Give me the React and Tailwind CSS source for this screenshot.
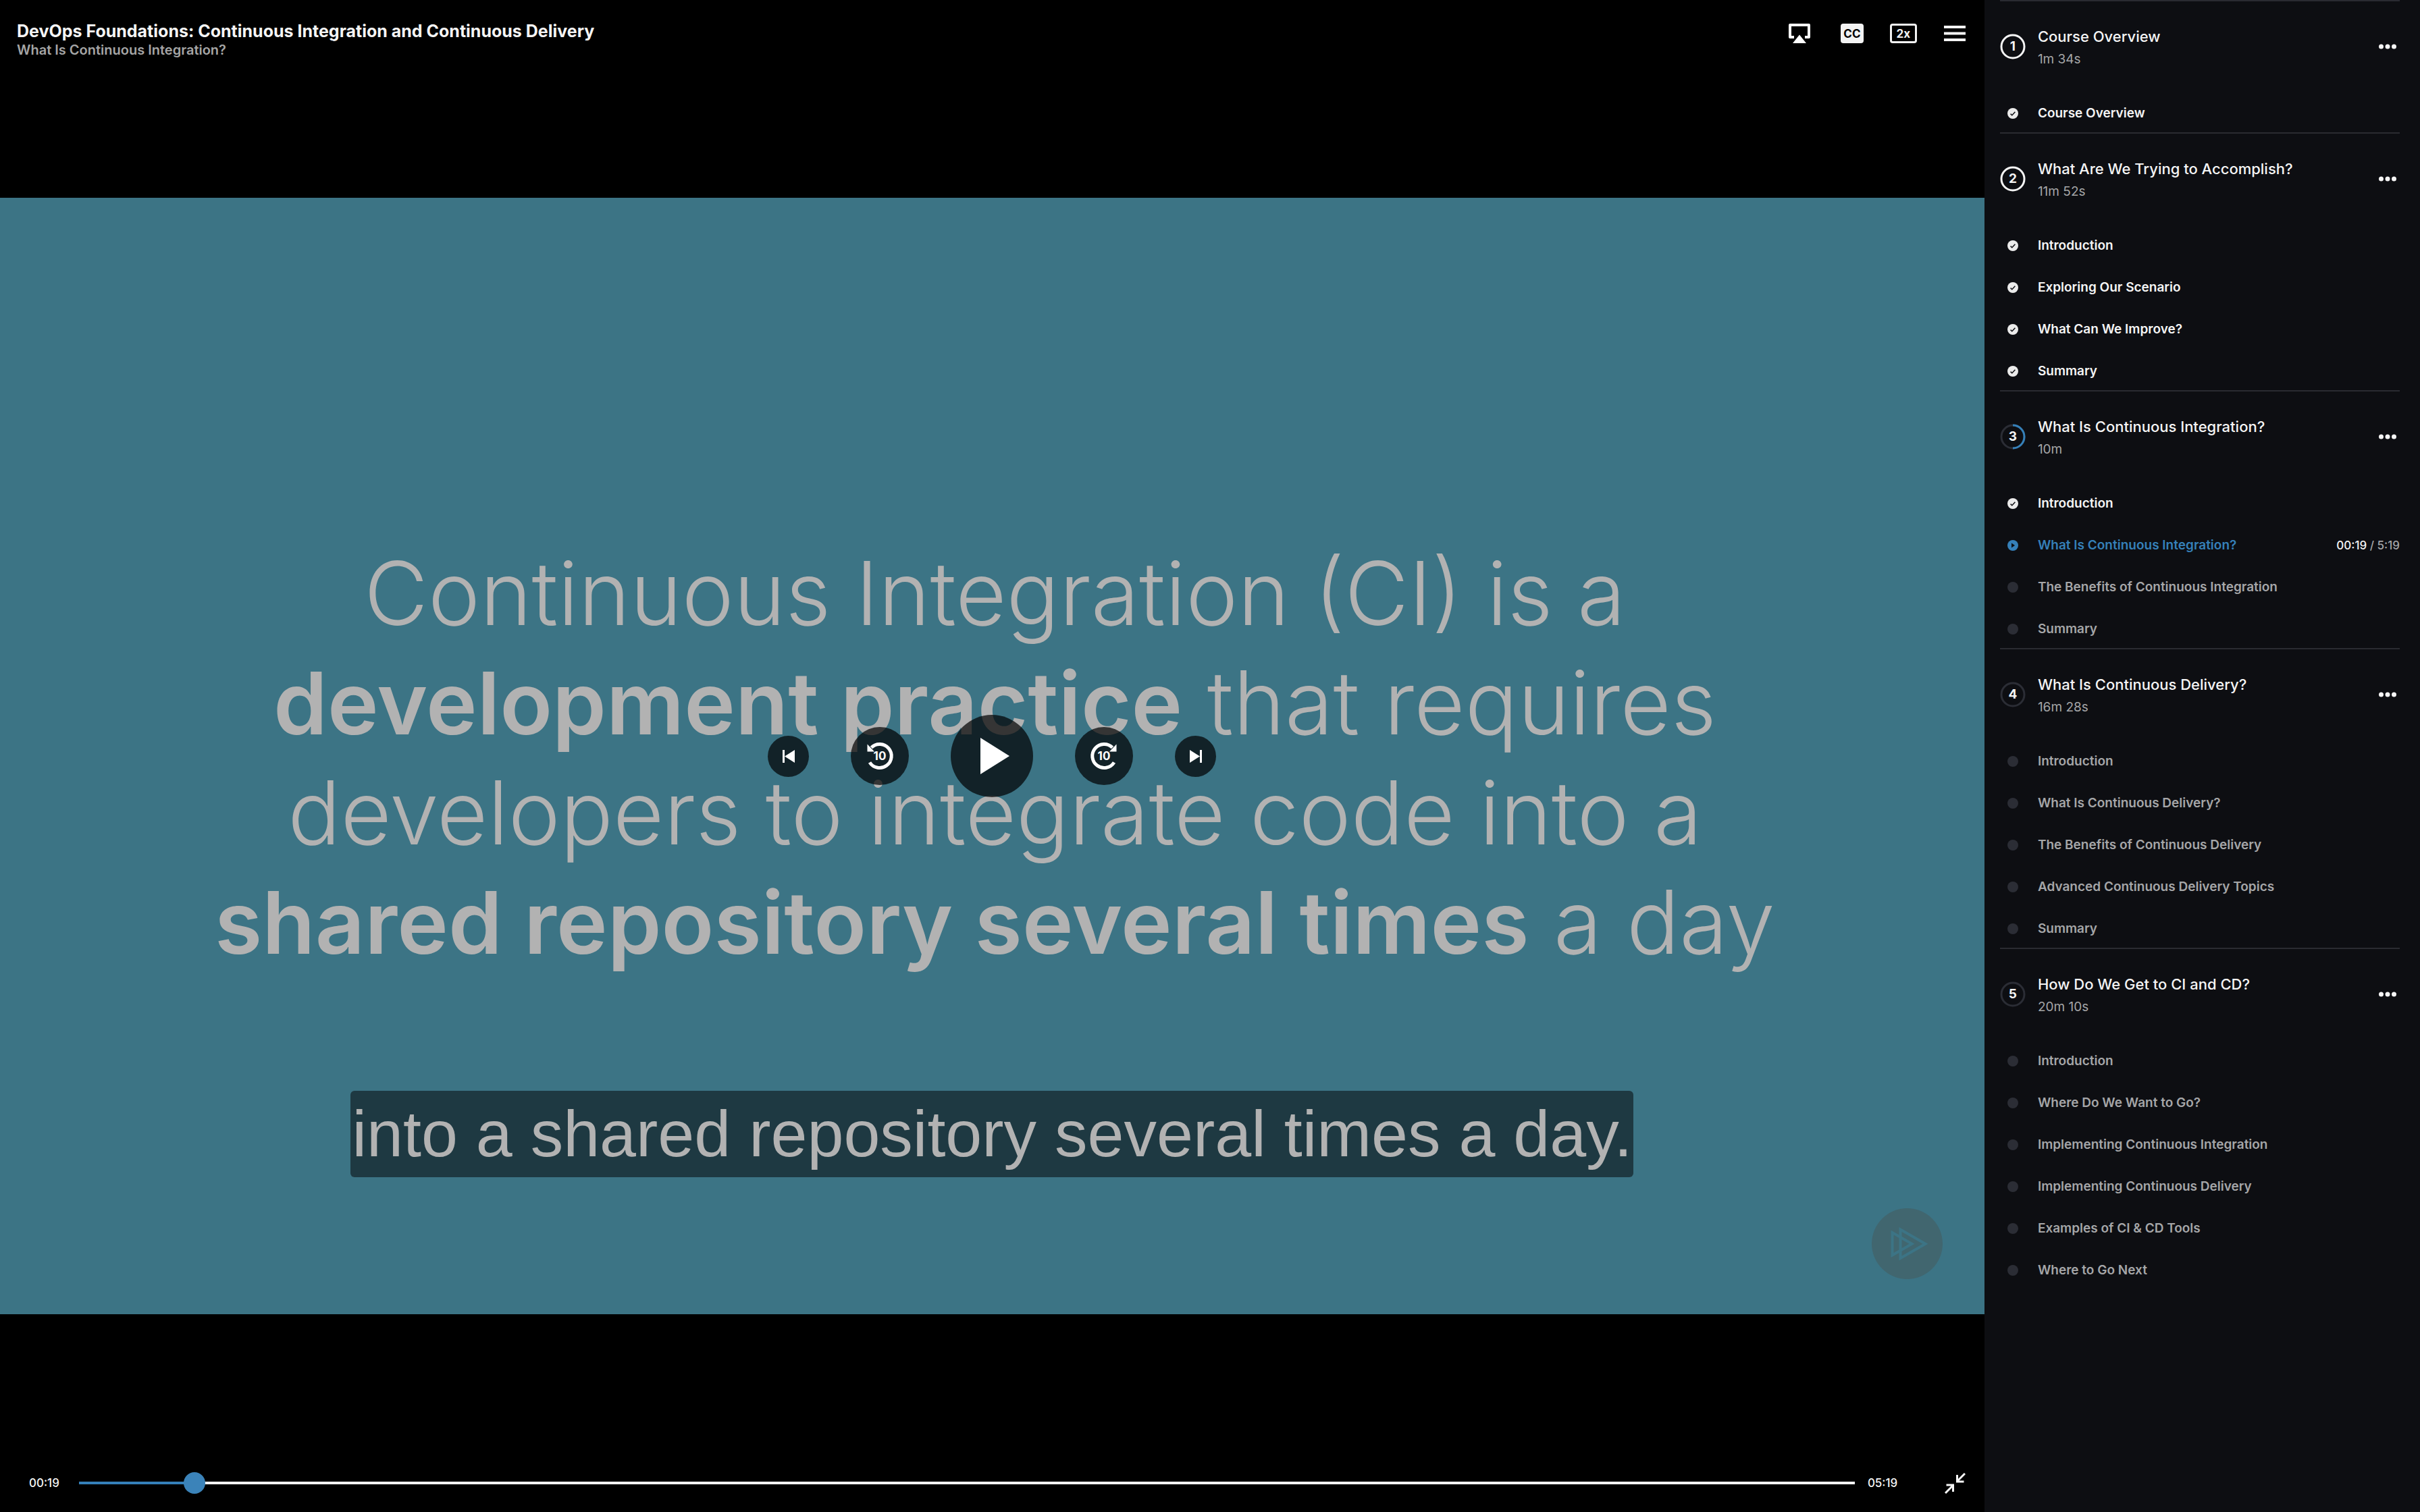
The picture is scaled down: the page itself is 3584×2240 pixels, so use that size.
import React, { useState } from "react";

const sections = [
  { title: "Course Overview", duration: "1m 34s", status: "done", clips: [["Course Overview", "done"]] },
  {
    title: "What Are We Trying to Accomplish?",
    duration: "11m 52s",
    status: "done",
    clips: [
      ["Introduction", "done"],
      ["Exploring Our Scenario", "done"],
      ["What Can We Improve?", "done"],
      ["Summary", "done"],
    ],
  },
  {
    title: "What Is Continuous Integration?",
    duration: "10m",
    status: "half",
    clips: [
      ["Introduction", "done"],
      ["What Is Continuous Integration?", "playing"],
      ["The Benefits of Continuous Integration", "todo"],
      ["Summary", "todo"],
    ],
  },
  {
    title: "What Is Continuous Delivery?",
    duration: "16m 28s",
    status: "todo",
    clips: [
      ["Introduction", "todo"],
      ["What Is Continuous Delivery?", "todo"],
      ["The Benefits of Continuous Delivery", "todo"],
      ["Advanced Continuous Delivery Topics", "todo"],
      ["Summary", "todo"],
    ],
  },
  {
    title: "How Do We Get to CI and CD?",
    duration: "20m 10s",
    status: "todo",
    clips: [
      ["Introduction", "todo"],
      ["Where Do We Want to Go?", "todo"],
      ["Implementing Continuous Integration", "todo"],
      ["Implementing Continuous Delivery", "todo"],
      ["Examples of CI & CD Tools", "todo"],
      ["Where to Go Next", "todo"],
    ],
  },
];

const clipColor = { done: "text-[#f5f5f5]", playing: "text-[#3580b9]", todo: "text-[#a5a6a8]" };

function SectionBadge({ number, status }) {
  return (
    <span className="relative flex size-[38px] shrink-0 items-center justify-center">
      <svg className="absolute inset-0" viewBox="0 0 38 38" fill="none" strokeWidth="3" aria-hidden="true">
        <circle cx="19" cy="19" r="17" stroke={status === "done" ? "#f5f5f5" : "#2b2d35"} />
        {status === "half" && <path d="M19 2a17 17 0 0 1 0 34" stroke="#3580b9" />}
      </svg>
      <span className="text-[19px] leading-7 font-bold text-[#f5f5f5]">{number}</span>
    </span>
  );
}

function ClipDot({ status }) {
  return (
    <span className="flex w-[38px] shrink-0 justify-center">
      <svg className="size-4" viewBox="0 0 16 16" aria-hidden="true">
        <circle cx="8" cy="8" r="8" fill={status === "done" ? "#ebebeb" : status === "playing" ? "#3580b9" : "#2b2d35"} />
        {status === "done" && <path d="M4.6 8.6l2.2 2.1 4.6-5" fill="none" stroke="#0d0e12" strokeWidth="1.5" />}
        {status === "playing" && <path d="M6 4.6v6.8L11 8z" fill="#0d0e12" />}
      </svg>
    </span>
  );
}

function Section({ number, title, duration, status, clips }) {
  return (
    <section className="border-t-2 border-[#2a2b31]">
      <header className="flex items-center gap-[18px] pt-8 pb-[33px]">
        <SectionBadge number={number} status={status} />
        <div className="min-w-0 flex-1 pt-[2px]">
          <h2 className="text-[22px] leading-9 font-medium text-[#f5f5f5]">{title}</h2>
          <p className="text-[19px] leading-8 text-[#a5a6a8]">{duration}</p>
        </div>
        <button type="button" aria-label={`More options for ${title}`} className="pr-1">
          <svg className="h-2 w-7" viewBox="0 0 28 8" fill="#f5f5f5" aria-hidden="true">
            <circle cx="4.5" cy="4" r="3.5" />
            <circle cx="14" cy="4" r="3.5" />
            <circle cx="23.5" cy="4" r="3.5" />
          </svg>
        </button>
      </header>
      <ul className="-mb-[3px]">
        {clips.map(([name, state]) => (
          <li key={name} className="flex h-[62px] items-center">
            <button type="button" className={`flex flex-1 items-center gap-[18px] text-left ${clipColor[state]}`}>
              <ClipDot status={state} />
              <span className="text-[19px] leading-7 font-semibold">{name}</span>
            </button>
            {state === "playing" && (
              <span className="text-[17px] leading-7 font-medium text-[#a5a6a8]">
                <span className="text-[#f5f5f5]">00:19</span> / 5:19
              </span>
            )}
          </li>
        ))}
      </ul>
    </section>
  );
}

function SkipIcon({ next }) {
  return (
    <svg className="h-[19px] w-[18px]" viewBox="0 0 18 19" fill="#fff" aria-hidden="true">
      {next ? <path d="M0 0v19l15-9.500zM15 0h3v19h-3z" /> : <path d="M18 0v19L3 9.500zM0 0h3v19H0z" />}
    </svg>
  );
}

function TenIcon({ forward }) {
  return (
    <svg className="size-[46px]" viewBox="-23 -23 46 46" aria-hidden="true">
      {forward ? (
        <g>
          <path d="M12.500 -12.500A17.500 17.500 0 1 0 15 9.500" fill="none" stroke="#fff" strokeWidth="5" />
          <path d="M18.500 -17.500V-6.500H8z" fill="#fff" />
        </g>
      ) : (
        <g>
          <path d="M-12.500 -12.500A17.500 17.500 0 1 1 -15 9.500" fill="none" stroke="#fff" strokeWidth="5" />
          <path d="M-18.500 -17.500V-6.500H-8z" fill="#fff" />
        </g>
      )}
      <text x="0" y="6" textAnchor="middle" fontSize="17" fontWeight="700" fill="#fff">
        10
      </text>
    </svg>
  );
}

const round = "flex shrink-0 items-center justify-center rounded-full bg-black/70";

function PlayerControls() {
  return (
    <div className="absolute inset-0 flex items-center justify-center gap-[62px]">
      <button type="button" aria-label="Previous clip" className={`${round} size-[61px]`}>
        <SkipIcon />
      </button>
      <button type="button" aria-label="Back 10 seconds" className={`${round} size-[86px]`}>
        <TenIcon />
      </button>
      <button type="button" aria-label="Play" className={`${round} size-[122px] pl-2`}>
        <svg className="h-[54px] w-[43px]" viewBox="0 0 43 54" fill="#fff" aria-hidden="true">
          <path d="M0 0v54l43-27z" />
        </svg>
      </button>
      <button type="button" aria-label="Forward 10 seconds" className={`${round} size-[86px]`}>
        <TenIcon forward />
      </button>
      <button type="button" aria-label="Next clip" className={`${round} size-[61px]`}>
        <SkipIcon next />
      </button>
    </div>
  );
}

function Watermark() {
  return (
    <svg className="absolute right-[62px] bottom-[52px] size-[105px]" viewBox="0 0 105 105" fill="none" aria-hidden="true">
      <circle cx="52.500" cy="52.500" r="52.500" fill="#41666f" />
      <g stroke="#3c7485" strokeWidth="4">
        <path d="M42.500 31.500L79.500 52.700L42.500 74z" />
        <path d="M30.500 36L59.500 52.700L30.500 69.500z" />
      </g>
    </svg>
  );
}

function TopActions() {
  return (
    <div className="flex">
      <button type="button" aria-label="AirPlay" className="flex w-20 justify-center">
        <svg className="h-[29px] w-8" viewBox="0 0 32 29" aria-hidden="true">
          <path d="M8 20H2V2H30V20H24" fill="none" stroke="#fff" strokeWidth="4" strokeLinejoin="round" />
          <path d="M16 14L28 30H4z" fill="#000" />
          <path d="M16 16.500L26 29H6z" fill="#fff" />
        </svg>
      </button>
      <button type="button" aria-label="Closed captions" className="flex w-[76px] justify-center">
        <span className="flex h-[29px] w-[34px] items-center justify-center rounded-[4px] bg-[#f3f3f3] text-[17px] leading-5 font-bold text-black">
          CC
        </span>
      </button>
      <button type="button" aria-label="Playback speed" className="flex w-[76px] justify-center">
        <span className="flex h-[29px] w-10 items-center justify-center rounded-[4px] border-[3px] border-[#f3f3f3] text-[17px] leading-5 font-bold text-[#f3f3f3]">
          2x
        </span>
      </button>
      <button type="button" aria-label="Table of contents" className="flex w-[76px] items-center justify-center">
        <svg className="h-[23px] w-8" viewBox="0 0 32 23" fill="#f3f3f3" aria-hidden="true">
          <path d="M0 0h32v4H0zM0 9.500h32v4H0zM0 19h32v4H0z" />
        </svg>
      </button>
    </div>
  );
}

function ProgressBar() {
  const [time, setTime] = useState(19);
  return (
    <div className="flex h-[34px] items-center pr-7 pl-[43px]">
      <span className="w-[45px] text-[17px] leading-6 font-medium whitespace-nowrap text-[#f5f5f5]">00:19</span>
      <input
        type="range"
        min="0"
        max="319"
        value={time}
        onChange={(e) => setTime(Number(e.target.value))}
        aria-label="Seek"
        style={{ "--played": `${(time / 319) * 99 + 0.5}%` }}
        className="mr-[19px] ml-[29px] h-8 min-w-0 flex-1 appearance-none bg-transparent [&::-webkit-slider-runnable-track]:h-1 [&::-webkit-slider-runnable-track]:bg-[linear-gradient(to_right,#3580b9_var(--played),#f5f5f5_var(--played))] [&::-webkit-slider-thumb]:-mt-[14px] [&::-webkit-slider-thumb]:size-8 [&::-webkit-slider-thumb]:appearance-none [&::-webkit-slider-thumb]:rounded-full [&::-webkit-slider-thumb]:bg-[#3b83b9]"
      />
      <span className="w-[45px] text-[17px] leading-6 font-medium whitespace-nowrap text-[#f5f5f5]">05:19</span>
      <button type="button" aria-label="Exit full screen" className="ml-[69px]">
        <svg className="size-[31px]" viewBox="0 0 31 31" fill="none" stroke="#f5f5f5" strokeWidth="3" aria-hidden="true">
          <path d="M30 1L19 12M18.500 3V13H28.500" />
          <path d="M1 30L12 19M2.500 18H12.500V28" />
        </svg>
      </button>
    </div>
  );
}

export default function App() {
  return (
    <div className="flex min-h-screen bg-black font-['Inter','Liberation_Sans',sans-serif]">
      <main className="flex min-w-0 flex-1 flex-col">
        <header className="flex-1 basis-0">
          <div className="flex items-start justify-between pt-8 pr-[6px] pl-[25px]">
            <div>
              <h1 className="text-[25px] leading-7 font-bold text-[#f5f5f5]">
                DevOps Foundations: Continuous Integration and Continuous Delivery
              </h1>
              <p className="text-[20px] leading-7 font-semibold text-[#a5a5a5]">What Is Continuous Integration?</p>
            </div>
            <div className="pt-[3px]">
              <TopActions />
            </div>
          </div>
        </header>

        <div className="relative flex aspect-video items-center justify-center bg-[#3c7485]">
          <p className="pt-[5px] pl-2 text-center text-[130px] leading-[162px] font-light whitespace-nowrap text-[#b2b2b2]">
            Continuous Integration (CI) is a
            <br />
            <strong className="text-[128px] font-semibold">development practice</strong> that requires
            <br />
            developers to integrate code into a
            <br />
            <strong className="text-[128px] font-semibold">shared repository several times</strong> a day
          </p>
          <div className="absolute inset-x-0 bottom-[203px] flex justify-center">
            <p className="rounded-[6px] bg-[#1e3942] px-[2px] font-['Liberation_Sans',Arial,sans-serif] text-[97px] leading-[128px] whitespace-nowrap text-[#b2b2b2]">
              into a shared repository several times a day.
            </p>
          </div>
          <PlayerControls />
          <Watermark />
        </div>

        <footer className="flex flex-1 basis-0 flex-col justify-end">
          <div className="pb-[26px]">
            <ProgressBar />
          </div>
        </footer>
      </main>

      <aside className="w-[18%] shrink-0 bg-[#0d0e12] pr-[30px] pl-[23px]">
        {sections.map((s, i) => (
          <Section key={s.title} number={i + 1} {...s} />
        ))}
      </aside>
    </div>
  );
}
